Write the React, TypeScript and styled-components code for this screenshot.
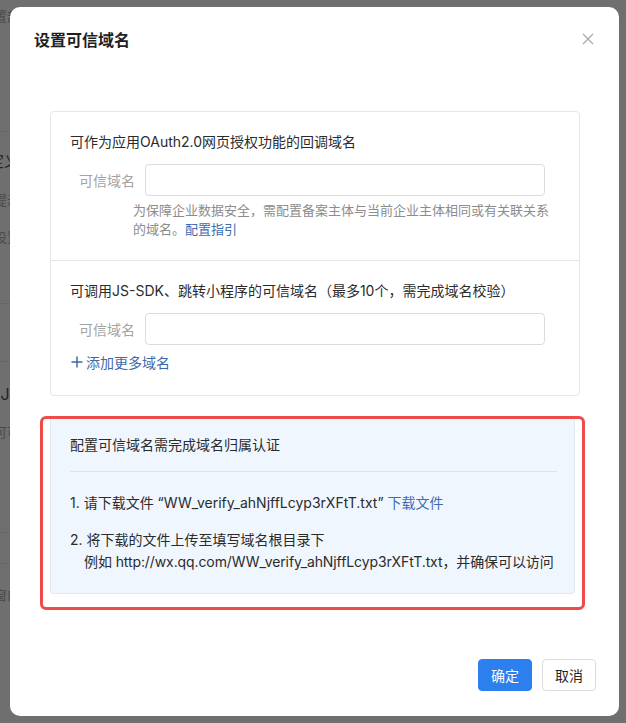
import styled, { createGlobalStyle } from "styled-components";

const GlobalStyle = createGlobalStyle`
  html, body {
    margin: 0;
    padding: 0;
  }
  body {
    font-family: "Inter", "Noto Sans CJK SC", sans-serif;
    -webkit-font-smoothing: antialiased;
  }
`;

const Screen = styled.div`
  position: relative;
  width: 626px;
  height: 723px;
  overflow: hidden;
  background: #6f6f6f;
`;

/* page behind the dim layer, only a sliver of it shows on the left */
const BehindPage = styled.div`
  display: flex;
  flex-direction: column;
  width: 60px;
  margin-left: -40px;
  color: #262626;
`;

const BehindRow = styled.div<{ $h: number; $line?: boolean }>`
  height: ${(p) => p.$h}px;
  display: flex;
  flex-direction: column;
  justify-content: center;
  gap: 18px;
  border-bottom: ${(p) => (p.$line ? "1px solid #666" : "none")};
  font-size: 13px;
  white-space: nowrap;
  text-align: right;
`;

const BehindStrong = styled.span`
  font-size: 16px;
  color: #262626;
`;

const BehindMuted = styled.span`
  color: #4a4a4a;
`;

const Overlay = styled.div`
  position: absolute;
  inset: 0;
  display: flex;
  padding: 7px 7px 7px 10px;
`;

const Modal = styled.div`
  flex: 1;
  min-width: 0;
  display: flex;
  flex-direction: column;
  background: #fff;
  border-radius: 10px;
`;

const Header = styled.div`
  display: flex;
  align-items: center;
  justify-content: space-between;
  height: 64px;
  padding: 0 24px;
`;

const Title = styled.h2`
  margin: 0;
  font-size: 16px;
  font-weight: 600;
  color: #1f1f1f;
`;

const CloseButton = styled.button`
  border: none;
  background: none;
  padding: 0;
  width: 14px;
  height: 14px;
  display: flex;
  align-items: center;
  justify-content: center;
  cursor: pointer;
`;

const Body = styled.div`
  flex: 1;
  min-width: 0;
  display: flex;
  flex-direction: column;
  padding: 40px 34px 0 30px;
`;

const Card = styled.div`
  border: 1px solid #e6e6e6;
  border-radius: 4px;
  margin: 0 5px 0 10px;
`;

const Section = styled.div<{ $last?: boolean }>`
  padding: 20px 34px ${(p) => (p.$last ? "23px" : "21px")} 19px;
  border-bottom: ${(p) => (p.$last ? "none" : "1px solid #e6e6e6")};
`;

const SectionTitle = styled.div`
  font-size: 14px;
  line-height: 20px;
  color: #2b2b2b;
  margin-bottom: 12px;
`;

const FieldRow = styled.div`
  display: flex;
  align-items: center;
  gap: 10px;
`;

const FieldLabel = styled.div`
  width: 65px;
  text-align: right;
  font-size: 14px;
  color: #a3a3a3;
`;

const TextInput = styled.input`
  flex: 1;
  min-width: 0;
  height: 32px;
  box-sizing: border-box;
  border: 1px solid #dcdcdc;
  border-radius: 4px;
  padding: 0 10px;
  font-size: 14px;
  outline: none;
`;

const Help = styled.div`
  margin: 5px -10px 0 63px;
  font-size: 13px;
  line-height: 19px;
  color: #8c8c8c;
`;

const Link = styled.a`
  color: #3d6cb4;
  text-decoration: none;
  cursor: pointer;
`;

const AddMore = styled.div`
  display: flex;
  align-items: center;
  gap: 2px;
  margin-top: 7px;
  font-size: 14px;
  color: #3f69a8;
  cursor: pointer;
`;

const Highlight = styled.div`
  margin-top: 20px;
  border: 3px solid #ee4b4b;
  border-radius: 6px;
  padding: 0 7px 13px 7px;
`;

const Notice = styled.div`
  background: #f0f6fd;
  border: 1px solid #e2e9f2;
  border-top: none;
  border-radius: 0 0 4px 4px;
  padding: 16px 17px 20px 19px;
  font-size: 14px;
  color: #2b2b2b;
`;

const NoticeTitle = styled.div`
  line-height: 20px;
  padding-bottom: 16px;
  border-bottom: 1px solid #dfe4ea;
`;

const Steps = styled.ol`
  list-style: none;
  margin: 0;
  padding: 20px 0 0 0;
  display: flex;
  flex-direction: column;
  gap: 15px;
`;

const Step = styled.li`
  line-height: 22px;
  white-space: nowrap;
`;

const StepIndent = styled.div`
  padding-left: 14px;
  letter-spacing: -0.1px;
`;

const Footer = styled.div`
  display: flex;
  justify-content: flex-end;
  gap: 10px;
  padding: 0 23px 25px 0;
`;

const Button = styled.button<{ $primary?: boolean }>`
  width: 54px;
  height: 32px;
  border-radius: 4px;
  font-family: "Inter", "Noto Sans CJK SC", sans-serif;
  font-size: 14px;
  cursor: pointer;
  border: 1px solid ${(p) => (p.$primary ? "#2b80ee" : "#dcdcdc")};
  background: ${(p) => (p.$primary ? "#2b80ee" : "#fff")};
  color: ${(p) => (p.$primary ? "#fff" : "#262626")};
`;

const App = () => {
  return (
    <>
      <GlobalStyle />
      <Screen>
        <BehindPage>
          <BehindRow $h={30}>
            <BehindMuted>配置部</BehindMuted>
          </BehindRow>
          <BehindRow $h={101} $line />
          <BehindRow $h={130}>
            <BehindStrong>定义</BehindStrong>
            <BehindMuted>提示</BehindMuted>
            <BehindMuted>设置</BehindMuted>
          </BehindRow>
          <BehindRow $h={41} $line />
          <BehindRow $h={57} $line />
          <BehindRow $h={100}>
            <BehindStrong>JS</BehindStrong>
            <BehindMuted>可可</BehindMuted>
          </BehindRow>
          <BehindRow $h={70} $line />
          <BehindRow $h={30} $line />
          <BehindRow $h={60}>
            <BehindMuted>窗口</BehindMuted>
          </BehindRow>
        </BehindPage>
        <Overlay>
          <Modal>
            <Header>
              <Title>设置可信域名</Title>
              <CloseButton aria-label="关闭">
                <svg width="12" height="12" viewBox="0 0 12 12">
                  <path d="M1 1 L11 11 M11 1 L1 11" stroke="#a8a8a8" strokeWidth="1.2" fill="none" />
                </svg>
              </CloseButton>
            </Header>
            <Body>
              <Card>
                <Section>
                  <SectionTitle>可作为应用OAuth2.0网页授权功能的回调域名</SectionTitle>
                  <FieldRow>
                    <FieldLabel>可信域名</FieldLabel>
                    <TextInput type="text" />
                  </FieldRow>
                  <Help>
                    为保障企业数据安全，需配置备案主体与当前企业主体相同或有关联关系的域名。
                    <Link>配置指引</Link>
                  </Help>
                </Section>
                <Section $last>
                  <SectionTitle>可调用JS-SDK、跳转小程序的可信域名（最多10个，需完成域名校验）</SectionTitle>
                  <FieldRow>
                    <FieldLabel>可信域名</FieldLabel>
                    <TextInput type="text" />
                  </FieldRow>
                  <AddMore>
                    <svg width="14" height="14" viewBox="0 0 14 14">
                      <path d="M7 1.5 V12.5 M1.5 7 H12.5" stroke="#3f69a8" strokeWidth="1.5" fill="none" />
                    </svg>
                    添加更多域名
                  </AddMore>
                </Section>
              </Card>
              <Highlight>
                <Notice>
                  <NoticeTitle>配置可信域名需完成域名归属认证</NoticeTitle>
                  <Steps>
                    <Step>
                      1. 请下载文件 “WW_verify_ahNjffLcyp3rXFtT.txt” <Link>下载文件</Link>
                    </Step>
                    <Step>
                      2. 将下载的文件上传至填写域名根目录下
                      <StepIndent>例如 http://wx.qq.com/WW_verify_ahNjffLcyp3rXFtT.txt，并确保可以访问</StepIndent>
                    </Step>
                  </Steps>
                </Notice>
              </Highlight>
            </Body>
            <Footer>
              <Button $primary>确定</Button>
              <Button>取消</Button>
            </Footer>
          </Modal>
        </Overlay>
      </Screen>
    </>
  );
};

export default App;
